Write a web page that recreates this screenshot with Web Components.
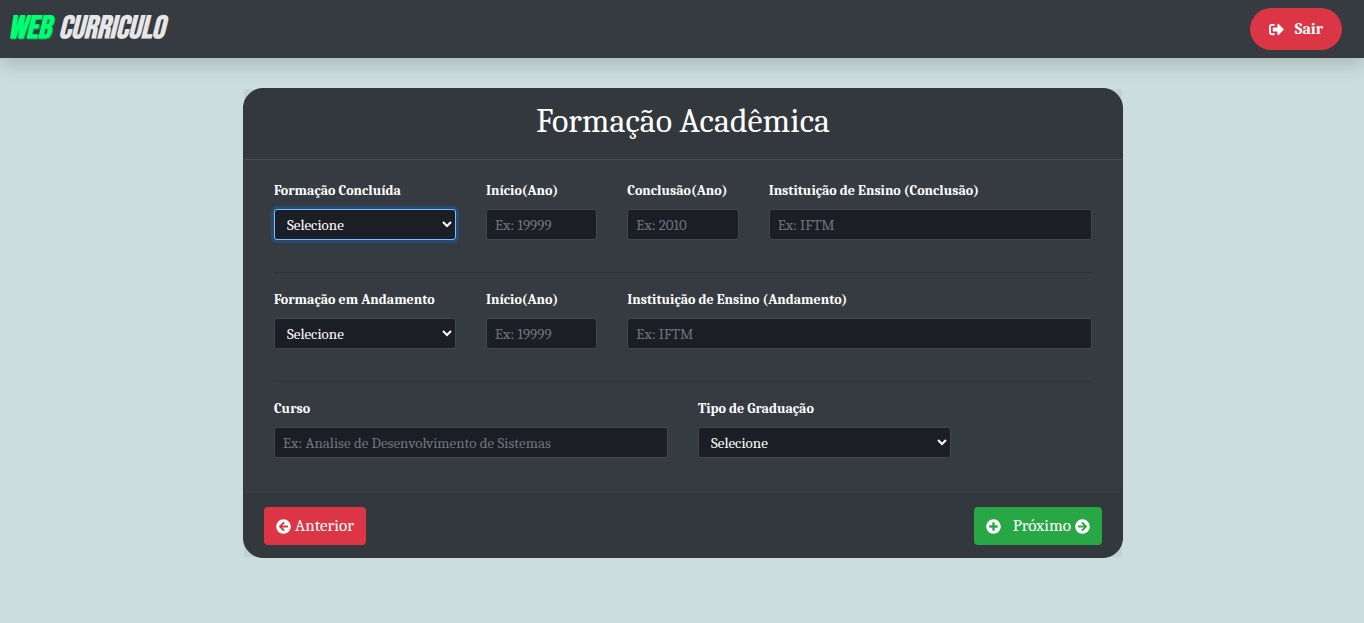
<!DOCTYPE html>
<html lang="pt-BR">
<head>
<meta charset="utf-8">
<meta name="viewport" content="width=device-width, initial-scale=1">
<title>Web Curriculo - Formação Acadêmica</title>
<style>
  body {
    margin: 0;
    min-height: 100vh;
    background: #cbdedd;
    color: #fff;
    font: 16px/24px Cambria, "Liberation Serif", serif;
  }
  main { padding: 30px 14px 30px 16px; }
</style>
</head>
<body>
<app-navbar>
  <brand-logo slot="brand"></brand-logo>
  <action-button variant="pill"><svg-icon name="exit" slot="before"></svg-icon>Sair</action-button>
</app-navbar>
<main>
  <form-card>
    <span slot="title">Formação Acadêmica</span>
    <form-row>
      <select-field label="Formação Concluída" span="3" focused></select-field>
      <text-field label="Início(Ano)" placeholder="Ex: 19999" span="2"></text-field>
      <text-field label="Conclusão(Ano)" placeholder="Ex: 2010" span="2"></text-field>
      <text-field label="Instituição de Ensino (Conclusão)" placeholder="Ex: IFTM" span="5"></text-field>
    </form-row>
    <form-row>
      <select-field label="Formação em Andamento" span="3"></select-field>
      <text-field label="Início(Ano)" placeholder="Ex: 19999" span="2"></text-field>
      <text-field label="Instituição de Ensino (Andamento)" placeholder="Ex: IFTM" span="7"></text-field>
    </form-row>
    <form-row>
      <text-field label="Curso" placeholder="Ex: Analise de Desenvolvimento de Sistemas" span="6"></text-field>
      <select-field label="Tipo de Graduação" span="4"></select-field>
    </form-row>
    <action-button slot="footer" variant="danger"><svg-icon name="left" slot="before"></svg-icon>Anterior</action-button>
    <action-button slot="footer" variant="success"><svg-icon name="plus" slot="before"></svg-icon>Próximo<svg-icon name="right" slot="after"></svg-icon></action-button>
  </form-card>
</main>

<script>
const icons = {
  exit: 'M497 273L329 441c-15 15-41 4.5-41-17v-96H152c-13.3 0-24-10.7-24-24v-96c0-13.3 10.7-24 24-24h136V88c0-21.4 25.9-32 41-17l168 168c9.3 9.4 9.3 24.6 0 34zM192 436v-40c0-6.6-5.4-12-12-12H96c-17.7 0-32-14.3-32-32V160c0-17.7 14.3-32 32-32h84c6.6 0 12-5.4 12-12V76c0-6.6-5.4-12-12-12H96c-53 0-96 43-96 96v192c0 53 43 96 96 96h84c6.6 0 12-5.4 12-12z',
  left: 'M256 504C119 504 8 393 8 256S119 8 256 8s248 111 248 248-111 248-248 248zm28.9-143.6L209.4 288H392c13.3 0 24-10.7 24-24v-16c0-13.3-10.7-24-24-24H209.4l75.5-72.4c9.7-9.3 9.9-24.8.4-34.3l-11-10.9c-9.4-9.4-24.6-9.4-33.9 0L107.7 239c-9.4 9.4-9.4 24.6 0 33.9l132.7 132.7c9.4 9.4 24.6 9.4 33.9 0l11-10.9c9.5-9.5 9.3-25-.4-34.3z',
  right: 'M256 8c137 0 248 111 248 248S393 504 256 504 8 393 8 256 119 8 256 8zm-28.9 143.6l75.5 72.4H120c-13.3 0-24 10.7-24 24v16c0 13.3 10.7 24 24 24h182.6l-75.5 72.4c-9.7 9.3-9.9 24.8-.4 34.3l11 10.9c9.4 9.4 24.6 9.4 33.9 0L404.3 273c9.4-9.4 9.4-24.6 0-33.9L271.6 106.3c-9.4-9.4-24.6-9.4-33.9 0l-11 10.9c-9.5 9.6-9.3 25.1.4 34.4z',
  plus: 'M256 8C119 8 8 119 8 256s111 248 248 248 248-111 248-248S393 8 256 8zm144 276c0 6.6-5.4 12-12 12h-92v92c0 6.6-5.4 12-12 12h-56c-6.6 0-12-5.4-12-12v-92h-92c-6.6 0-12-5.4-12-12v-56c0-6.6 5.4-12 12-12h92v-92c0-6.6 5.4-12 12-12h56c6.6 0 12 5.4 12 12v92h92c6.6 0 12 5.4 12 12v56z'
};

class Base extends HTMLElement {
  constructor() {
    super();
    this.attachShadow({ mode: 'open' });
  }
  connectedCallback() {
    this.shadowRoot.innerHTML = this.render();
  }
}

customElements.define('svg-icon', class extends Base {
  render() {
    return `<style>
      :host { display: block; width: 15px; height: 15px; }
      svg { display: block; width: 100%; height: 100%; fill: currentColor; }
    </style>
    <svg viewBox="0 0 512 512" aria-hidden="true"><path d="${icons[this.getAttribute('name')]}"/></svg>`;
  }
});

customElements.define('brand-logo', class extends Base {
  render() {
    return `<style>
      :host { display: block; }
      a {
        display: flex; gap: 8px; color: #e6e6e6; text-decoration: none;
        font: italic bold 32px/42px "Bebas Neue", "Liberation Sans", sans-serif;
      }
      .web { color: #00ff73; text-shadow: 1px 1px 0 #1e8c55; }
    </style>
    <a href="#"><span class="web">WEB</span><span>CURRICULO</span></a>`;
  }
});

customElements.define('app-navbar', class extends Base {
  render() {
    return `<style>
      :host { display: block; position: relative; }
      nav {
        display: flex; align-items: center; justify-content: space-between;
        padding: 8px 22px 8px 8px;
        background: #363a41;
        box-shadow: 0 8px 16px rgba(0, 0, 0, .15);
      }
    </style>
    <nav><slot name="brand"></slot><slot></slot></nav>`;
  }
});

customElements.define('action-button', class extends Base {
  render() {
    return `<style>
      :host { display: block; }
      button {
        display: flex; align-items: center; gap: 4px;
        margin: 0; padding: 6px 11px; border: 1px solid transparent; border-radius: 4px;
        color: #fff; background: #dc3545; font: inherit; font-size: 17px; cursor: pointer;
      }
      :host([variant=success]) button { background: #28a745; }
      :host([variant=success]) ::slotted([slot=before]) { margin-right: 8px; }
      :host([variant=pill]) button {
        gap: 11px; padding: 8px 18px; border-radius: 21px; font-size: 16px; font-weight: bold;
      }
    </style>
    <button type="button"><slot name="before"></slot><slot></slot><slot name="after"></slot></button>`;
  }
});

customElements.define('form-card', class extends Base {
  render() {
    return `<style>
      :host {
        display: block; box-sizing: border-box; max-width: 880px; margin: 0 auto;
        background: #363b41; border: 1px solid #323639; border-radius: 20px;
      }
      header, footer { background: rgba(0, 5, 0, .05); }
      header { padding: 12px 20px 18px; border-bottom: 1px solid #4a4b4d; }
      h1 { margin: 0; font-weight: normal; font-size: 34px; line-height: 40px; text-align: center; }
      .body { padding: 20px 30px; }
      footer {
        display: flex; justify-content: space-between;
        padding: 12px 20px; border-top: 1px solid #2f3236;
      }
    </style>
    <header><h1><slot name="title"></slot></h1></header>
    <div class="body"><slot></slot></div>
    <footer><slot name="footer"></slot></footer>`;
  }
});

customElements.define('form-row', class extends Base {
  render() {
    return `<style>
      :host {
        display: grid; grid-template-columns: repeat(12, minmax(0, 1fr)); column-gap: 30px;
        padding-bottom: 16px;
      }
      :host(:not(:last-of-type)) {
        padding-bottom: 32px; margin-bottom: 16px; border-bottom: 1px solid #2f3335;
      }
    </style>
    <slot></slot>`;
  }
});

const fieldStyle = span => `
  :host { display: block; grid-column: span ${span}; }
  label { display: block; margin-bottom: 8px; font-weight: bold; font-size: 14px; line-height: 21px; white-space: nowrap; }
  input, select {
    display: block; box-sizing: border-box; width: 100%; height: 31px; margin: 0; padding: 4px 8px;
    border: 1px solid #444647; border-radius: 3px; background-color: #1c1e26; color: #fff;
    font-family: inherit; font-size: 15px; line-height: 21px;
  }
  ::placeholder { color: #6c757d; opacity: 1; }
  input:focus, select:focus {
    outline: 0; border-color: #80bdff; box-shadow: 0 0 0 3px rgba(0, 123, 255, .25);
  }`;

customElements.define('text-field', class extends Base {
  render() {
    return `<style>${fieldStyle(this.getAttribute('span'))}</style>
    <label for="control">${this.getAttribute('label')}</label>
    <input id="control" type="text" placeholder="${this.getAttribute('placeholder')}">`;
  }
});

customElements.define('select-field', class extends Base {
  render() {
    return `<style>${fieldStyle(this.getAttribute('span'))}</style>
    <label for="control">${this.getAttribute('label')}</label>
    <select id="control"><option>Selecione</option></select>`;
  }
  connectedCallback() {
    super.connectedCallback();
    if (this.hasAttribute('focused')) this.shadowRoot.querySelector('select').focus();
  }
});
</script>
</body>
</html>
